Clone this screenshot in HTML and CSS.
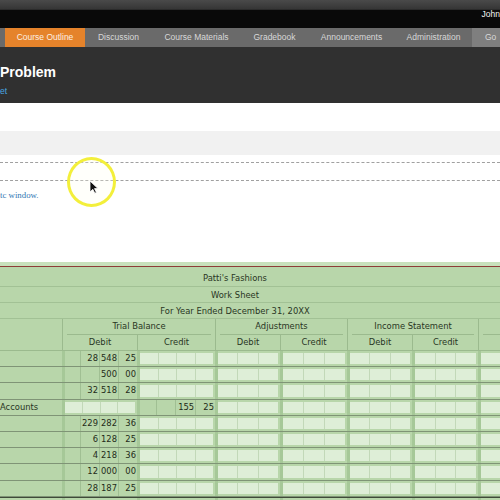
FILE: index.html
```html
<!DOCTYPE html>
<html>
<head>
<meta charset="utf-8">
<link rel="stylesheet" href="styles.css">
</head>
<body>
<div class="topbar"></div>
<div class="userbar"><span class="user">John</span></div>
<nav class="nav">
  <span class="tab active w1">Course Outline</span>
  <span class="tab w2">Discussion</span>
  <span class="tab w3">Course Materials</span>
  <span class="tab w4">Gradebook</span>
  <span class="tab w5">Announcements</span>
  <span class="tab w6">Administration</span>
  <span class="tab go">Go</span>
</nav>
<header class="head">
  <h1 class="title">Problem</h1>
  <a class="sub">et</a>
</header>
<main class="content">
  <div class="band"></div>
  <div class="field"></div>
  <p class="link">tc window.</p>
</main>

<div class="highlight"></div>
<svg class="cursor" width="10" height="14" viewBox="0 0 10 14"><path d="M1 1 L1 12 L3.8 9.3 L5.8 13.2 L7.4 12.4 L5.5 8.6 L9 8.6 Z" fill="#111" stroke="#fff" stroke-width="0.8"/></svg>

<section class="sheet">
  <div class="trow t1">Patti's Fashions</div>
  <div class="trow">Work Sheet</div>
  <div class="trow">For Year Ended December 31, 20XX</div>
  <div class="hgrid">
    <div class="hname"></div>
    <div class="grp"><span>Trial Balance</span></div>
    <div class="grp"><span>Adjustments</span></div>
    <div class="grp"><span>Income Statement</span></div>
    <div class="grp"><span></span></div>
    <div class="dc">Debit</div><div class="dc">Credit</div>
    <div class="dc">Debit</div><div class="dc">Credit</div>
    <div class="dc">Debit</div><div class="dc">Credit</div>
    <div class="dc"></div><div class="dc"></div>
  </div>

  <div class="drow">
    <div class="nm"></div>
    <div class="amt f"><span></span><span>28</span><span>548</span><span>25</span></div>
    <div class="amt i"><div class="box"><span></span><span></span><span></span><span></span></div></div>
    <div class="amt i"><div class="box"><span></span><span></span><span></span></div></div>
    <div class="amt i"><div class="box"><span></span><span></span><span></span></div></div>
    <div class="amt i"><div class="box"><span></span><span></span><span></span></div></div>
    <div class="amt i"><div class="box"><span></span><span></span><span></span></div></div>
    <div class="amt i"><div class="box"><span></span><span></span><span></span></div></div>
    <div class="amt i"><div class="box"><span></span><span></span><span></span></div></div>
  </div>
  <div class="drow">
    <div class="nm"></div>
    <div class="amt f"><span></span><span></span><span>500</span><span>00</span></div>
    <div class="amt i"><div class="box"><span></span><span></span><span></span><span></span></div></div>
    <div class="amt i"><div class="box"><span></span><span></span><span></span></div></div>
    <div class="amt i"><div class="box"><span></span><span></span><span></span></div></div>
    <div class="amt i"><div class="box"><span></span><span></span><span></span></div></div>
    <div class="amt i"><div class="box"><span></span><span></span><span></span></div></div>
    <div class="amt i"><div class="box"><span></span><span></span><span></span></div></div>
    <div class="amt i"><div class="box"><span></span><span></span><span></span></div></div>
  </div>
  <div class="drow">
    <div class="nm"></div>
    <div class="amt f"><span></span><span>32</span><span>518</span><span>28</span></div>
    <div class="amt i"><div class="box"><span></span><span></span><span></span><span></span></div></div>
    <div class="amt i"><div class="box"><span></span><span></span><span></span></div></div>
    <div class="amt i"><div class="box"><span></span><span></span><span></span></div></div>
    <div class="amt i"><div class="box"><span></span><span></span><span></span></div></div>
    <div class="amt i"><div class="box"><span></span><span></span><span></span></div></div>
    <div class="amt i"><div class="box"><span></span><span></span><span></span></div></div>
    <div class="amt i"><div class="box"><span></span><span></span><span></span></div></div>
  </div>
  <div class="drow">
    <div class="nm">Accounts</div>
    <div class="amt i"><div class="box"><span></span><span></span><span></span><span></span></div></div>
    <div class="amt f"><span></span><span></span><span>155</span><span>25</span></div>
    <div class="amt i"><div class="box"><span></span><span></span><span></span></div></div>
    <div class="amt i"><div class="box"><span></span><span></span><span></span></div></div>
    <div class="amt i"><div class="box"><span></span><span></span><span></span></div></div>
    <div class="amt i"><div class="box"><span></span><span></span><span></span></div></div>
    <div class="amt i"><div class="box"><span></span><span></span><span></span></div></div>
    <div class="amt i"><div class="box"><span></span><span></span><span></span></div></div>
  </div>
  <div class="drow">
    <div class="nm"></div>
    <div class="amt f"><span></span><span>229</span><span>282</span><span>36</span></div>
    <div class="amt i"><div class="box"><span></span><span></span><span></span><span></span></div></div>
    <div class="amt i"><div class="box"><span></span><span></span><span></span></div></div>
    <div class="amt i"><div class="box"><span></span><span></span><span></span></div></div>
    <div class="amt i"><div class="box"><span></span><span></span><span></span></div></div>
    <div class="amt i"><div class="box"><span></span><span></span><span></span></div></div>
    <div class="amt i"><div class="box"><span></span><span></span><span></span></div></div>
    <div class="amt i"><div class="box"><span></span><span></span><span></span></div></div>
  </div>
  <div class="drow">
    <div class="nm"></div>
    <div class="amt f"><span></span><span>6</span><span>128</span><span>25</span></div>
    <div class="amt i"><div class="box"><span></span><span></span><span></span><span></span></div></div>
    <div class="amt i"><div class="box"><span></span><span></span><span></span></div></div>
    <div class="amt i"><div class="box"><span></span><span></span><span></span></div></div>
    <div class="amt i"><div class="box"><span></span><span></span><span></span></div></div>
    <div class="amt i"><div class="box"><span></span><span></span><span></span></div></div>
    <div class="amt i"><div class="box"><span></span><span></span><span></span></div></div>
    <div class="amt i"><div class="box"><span></span><span></span><span></span></div></div>
  </div>
  <div class="drow">
    <div class="nm"></div>
    <div class="amt f"><span></span><span>4</span><span>218</span><span>36</span></div>
    <div class="amt i"><div class="box"><span></span><span></span><span></span><span></span></div></div>
    <div class="amt i"><div class="box"><span></span><span></span><span></span></div></div>
    <div class="amt i"><div class="box"><span></span><span></span><span></span></div></div>
    <div class="amt i"><div class="box"><span></span><span></span><span></span></div></div>
    <div class="amt i"><div class="box"><span></span><span></span><span></span></div></div>
    <div class="amt i"><div class="box"><span></span><span></span><span></span></div></div>
    <div class="amt i"><div class="box"><span></span><span></span><span></span></div></div>
  </div>
  <div class="drow">
    <div class="nm"></div>
    <div class="amt f"><span></span><span>12</span><span>000</span><span>00</span></div>
    <div class="amt i"><div class="box"><span></span><span></span><span></span><span></span></div></div>
    <div class="amt i"><div class="box"><span></span><span></span><span></span></div></div>
    <div class="amt i"><div class="box"><span></span><span></span><span></span></div></div>
    <div class="amt i"><div class="box"><span></span><span></span><span></span></div></div>
    <div class="amt i"><div class="box"><span></span><span></span><span></span></div></div>
    <div class="amt i"><div class="box"><span></span><span></span><span></span></div></div>
    <div class="amt i"><div class="box"><span></span><span></span><span></span></div></div>
  </div>
  <div class="drow">
    <div class="nm"></div>
    <div class="amt f"><span></span><span>28</span><span>187</span><span>25</span></div>
    <div class="amt i"><div class="box"><span></span><span></span><span></span><span></span></div></div>
    <div class="amt i"><div class="box"><span></span><span></span><span></span></div></div>
    <div class="amt i"><div class="box"><span></span><span></span><span></span></div></div>
    <div class="amt i"><div class="box"><span></span><span></span><span></span></div></div>
    <div class="amt i"><div class="box"><span></span><span></span><span></span></div></div>
    <div class="amt i"><div class="box"><span></span><span></span><span></span></div></div>
    <div class="amt i"><div class="box"><span></span><span></span><span></span></div></div>
  </div>
  <div class="drow total">
    <div class="nm"></div>
    <div class="amt i"><div class="box"><span></span><span></span><span></span><span></span></div></div>
    <div class="amt i"><div class="box"><span></span><span></span><span></span><span></span></div></div>
    <div class="amt i"><div class="box"><span></span><span></span><span></span></div></div>
    <div class="amt i"><div class="box"><span></span><span></span><span></span></div></div>
    <div class="amt i"><div class="box"><span></span><span></span><span></span></div></div>
    <div class="amt i"><div class="box"><span></span><span></span><span></span></div></div>
    <div class="amt i"><div class="box"><span></span><span></span><span></span></div></div>
    <div class="amt i"><div class="box"><span></span><span></span><span></span></div></div>
  </div>
</section>
</body>
</html>
```
FILE: styles.css
```css
* { box-sizing: border-box; margin: 0; padding: 0; }
html, body { width: 500px; height: 500px; overflow: hidden; background: #fff; }
body { font-family: "Liberation Sans", Arial, sans-serif; position: relative; }

.topbar { height: 10px; background: linear-gradient(#4a4a4a, #363636); border-bottom: 1px solid #2b2b2b; }
.userbar { height: 18px; background: #090909; display: flex; justify-content: flex-end; }
.user { color: #f4f4f4; font-size: 8.5px; line-height: 9px; white-space: nowrap; }

.nav { height: 19px; background: #6a6a6a; display: flex; padding-left: 5px; }
.tab { font-size: 8.5px; line-height: 19px; color: #d8d8d8; text-align: center; white-space: nowrap; }
.tab.active { background: #e5832b; color: #fcefe2; }
.w1 { width: 80px; }
.w2 { width: 67px; }
.w3 { width: 89px; }
.w4 { width: 67px; }
.w5 { width: 87px; }
.w6 { width: 77px; }
.go { flex: 1; background: #7f7f7f; text-align: left; padding-left: 13px; }

.head { height: 56px; background: #303030; padding-top: 17px; }
.title { font-size: 14px; font-weight: bold; color: #fff; line-height: 16px; }
.sub { display: block; color: #4aa8e2; font-size: 8.5px; line-height: 10px; margin-top: 6px; }

.content { height: 159px; padding-top: 28px; }
.band { height: 24px; background: #f1f1f1; }
.field { margin-top: 7px; height: 19px; border-top: 1px dashed #a0a0a0; border-bottom: 1px dashed #a0a0a0; }
.link { font-family: "Liberation Serif", "Times New Roman", serif; font-size: 8.8px; line-height: 12px; color: #3479b4; margin-top: 8px; }

.highlight { position: absolute; left: 67px; top: 157px; width: 49px; height: 50px; border: 3px solid #f3ef3b; border-radius: 50%; background: rgba(255, 255, 240, 0.25); }
.cursor { position: absolute; left: 89px; top: 180px; }

.sheet { width: 750px; margin-left: -140px; background: #b8d6aa; border-top: 4px solid #c8e1bc; font-family: "DejaVu Sans", Verdana, sans-serif; font-size: 8.4px; color: #28351f; }
.trow { height: 16px; border-bottom: 1px solid #a2c195; text-align: center; line-height: 16px; white-space: nowrap; }
.trow.t1 { height: 21px; border-top: 1px solid #8e3d37; line-height: 22px; }

.hgrid { display: grid; grid-template-columns: 202px 75px 78px 65px 67px 65px 66px 65px 67px; grid-template-rows: 16px 15px; border-bottom: 1px solid #9bba8e; }
.hname { grid-row: 1 / span 2; }
.grp { grid-column: span 2; border-left: 1px solid #9bba8e; padding: 0 4px; }
.grp span { display: block; height: 16px; line-height: 15px; text-align: center; border-bottom: 1px solid #9bba8e; white-space: nowrap; }
.dc { border-left: 1px solid #9bba8e; text-align: center; line-height: 15px; grid-row: 2; }

.drow { display: grid; grid-template-columns: 202px 75px 78px 65px 67px 65px 66px 65px 67px; height: 16.2px; border-bottom: 1px solid #7f9476; }
.drow.total { border-top: 1px solid #3f4a39; height: 20px; }
.nm { padding-left: 140px; line-height: 15px; white-space: nowrap; font-size: 8.4px; }
.amt { display: flex; border-left: 3px solid #a6c898; min-width: 0; }
.amt > span { flex: 1; min-width: 0; border-left: 1px solid #a0bf93; text-align: right; padding-right: 1px; font-size: 8.4px; line-height: 15px; color: #1f2b19; }
.amt > span:first-child { flex: 0.82; border-left: none; }
.box { flex: 1; display: flex; margin: 2px 2px 2px 0; background: #deeed7; }
.box span { flex: 1; border-left: 1px solid #c2d8b8; }
.box span:first-child { border-left: none; }
```
